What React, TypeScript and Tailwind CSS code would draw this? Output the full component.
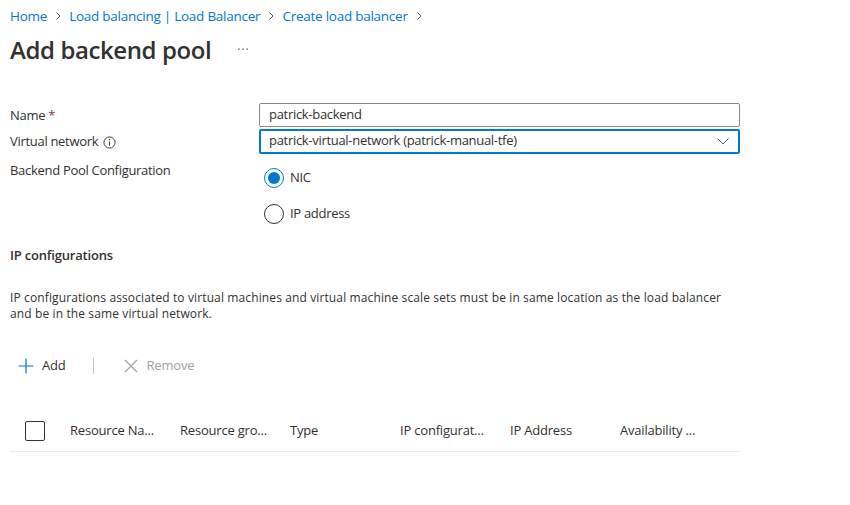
import React from "react";

const Chevron = () => (
  <svg width="12" height="12" viewBox="0 0 12 12" className="mx-[5px]">
    <path d="M4.5 2.5 L8 6 L4.5 9.5" fill="none" stroke="#605e5c" strokeWidth="1" />
  </svg>
);

export default function App() {
  const font = { fontFamily: '"Segoe UI", "Open Sans", "Noto Sans", sans-serif' };
  const cols = ["Resource Na...", "Resource gro...", "Type", "IP configurat...", "IP Address", "Availability ..."];
  return (
    <div className="w-[850px] h-[505px] bg-white text-[#323130] overflow-hidden" style={font}>
      <div className="flex items-center h-[20px] mt-[6px] pl-[10px] text-[13.5px] tracking-[-0.25px] text-[#0078d4]">
        <span>Home</span>
        <Chevron />
        <span>Load balancing | Load Balancer</span>
        <Chevron />
        <span>Create load balancer</span>
        <Chevron />
      </div>
      <div className="flex items-center h-[36px] mt-[6px] pl-[10px]">
        <h1 className="text-[24px] font-semibold text-[#323130] tracking-[-0.4px]">Add backend pool</h1>
        <span className="ml-[26px] text-[12px] text-[#605e5c] tracking-[1px]">···</span>
      </div>
      <div className="mt-[35px] pl-[10px] pr-[110px] text-[13px]">
        <div className="tracking-[-0.3px]">
          <div className="flex items-center h-[24px]">
            <div className="w-[249px] pt-[2px]">
              Name <span className="text-[#a4262c]">*</span>
            </div>
            <div className="flex-1 h-[24px] border border-[#8a8886] rounded-[2px] flex items-center px-[9px]">patrick-backend</div>
          </div>
          <div className="flex items-center h-[24px] mt-[2px]">
            <div className="w-[249px] flex items-center pt-[2px]">
              Virtual network
              <svg width="13" height="13" viewBox="0 0 14 14" className="ml-[5px]">
                <circle cx="7" cy="7" r="6" fill="none" stroke="#323130" strokeWidth="1" />
                <line x1="7" y1="6" x2="7" y2="10.5" stroke="#323130" strokeWidth="1" />
                <circle cx="7" cy="4" r="0.7" fill="#323130" />
              </svg>
            </div>
            <div className="flex-1 h-[25px] border-2 border-[#0078d4] rounded-[2px] flex items-center px-[8px] justify-between">
              <span>patrick-virtual-network (patrick-manual-tfe)</span>
              <svg width="14" height="14" viewBox="0 0 14 14">
                <path d="M1.5 4.5 L7 10 L12.5 4.5" fill="none" stroke="#605e5c" strokeWidth="1" />
              </svg>
            </div>
          </div>
          <div className="flex mt-[7px]">
            <div className="w-[249px] leading-[20px]">Backend Pool Configuration</div>
            <div className="flex flex-col pl-[5px]">
              <div className="flex items-center h-[20px] mt-[8px]">
                <span className="w-[20px] h-[20px] rounded-full border border-[#0078d4] flex items-center justify-center">
                  <span className="w-[12px] h-[12px] rounded-full bg-[#0078d4]" />
                </span>
                <span className="ml-[6px]">NIC</span>
              </div>
              <div className="flex items-center h-[20px] mt-[16px]">
                <span className="w-[20px] h-[20px] rounded-full border border-[#323130]" />
                <span className="ml-[6px]">IP address</span>
              </div>
            </div>
          </div>
        </div>
        <div className="mt-[21px] font-semibold text-[13px] h-[20px] leading-[20px] tracking-[-0.2px]">IP configurations</div>
        <div className="mt-[25px] text-[12px] leading-[16px] tracking-[0.12px]">
          IP configurations associated to virtual machines and virtual machine scale sets must be in same location as the load balancer and be in the same virtual network.
        </div>
        <div className="flex items-center h-[20px] mt-[34px] pl-[8px] text-[13px] tracking-[-0.2px]">
          <svg width="16" height="16" viewBox="0 0 16 16">
            <path d="M8 0.5 V15.5 M0.5 8 H15.5" stroke="#0078d4" strokeWidth="1.2" />
          </svg>
          <span className="ml-[8px]">Add</span>
          <span className="ml-[27px] w-px h-[16px] bg-[#c8c6c4]" />
          <svg width="14" height="14" viewBox="0 0 14 14" className="ml-[30px]">
            <path d="M1 1 L13 13 M13 1 L1 13" stroke="#a19f9d" strokeWidth="1.1" />
          </svg>
          <span className="ml-[9px] text-[#a19f9d]">Remove</span>
        </div>
        <div className="mt-[34px] flex items-center h-[42px] border-b border-[#edebe9] text-[13px] tracking-[-0.2px]">
          <span className="ml-[15px] w-[20px] h-[20px] border border-[#323130] rounded-[2px]" />
          <div className="flex ml-[25px]">
            {cols.map((c) => (
              <div key={c} className="w-[110px]">{c}</div>
            ))}
          </div>
        </div>
      </div>
    </div>
  );
}
